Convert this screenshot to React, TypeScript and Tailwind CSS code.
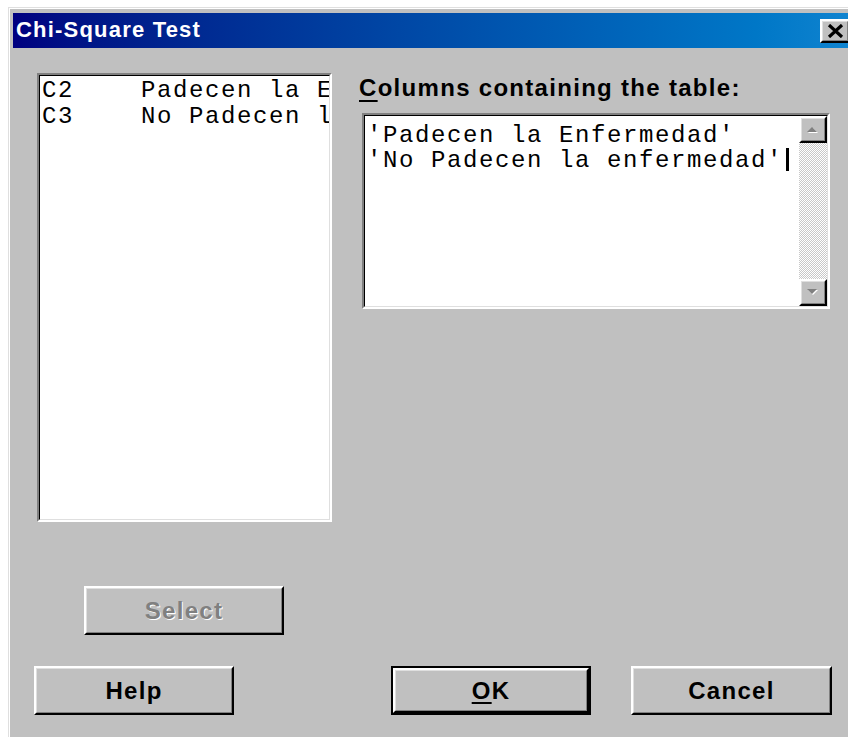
import type { ReactNode } from "react";

// Win9x-style raised bevel used by push buttons and scroll arrows
function Raised({ children, className = "" }: { children?: ReactNode; className?: string }) {
  return (
    <div
      className={`border-2 border-t-white border-l-white border-r-black border-b-black bg-[#c0c0c0] ${className}`}
    >
      <div className="flex h-full w-full items-center justify-center border border-t-[#dfdfdf] border-l-[#dfdfdf] border-r-[#808080] border-b-[#808080]">
        {children}
      </div>
    </div>
  );
}

function Sunken({ children, className = "" }: { children?: ReactNode; className?: string }) {
  return (
    <div
      className={`border-2 border-t-[#808080] border-l-[#808080] border-r-white border-b-white ${className}`}
    >
      <div className="h-full w-full overflow-hidden border border-t-black border-l-black border-r-[#dfdfdf] border-b-[#dfdfdf] bg-white">
        {children}
      </div>
    </div>
  );
}

function PushButton({
  children,
  disabled = false,
  className = "",
}: {
  children: ReactNode;
  disabled?: boolean;
  className?: string;
}) {
  return (
    <Raised className={`h-[49px] w-[200px] ${className}`}>
      <span
        className={`text-[24px] font-bold tracking-[1.3px] ${
          disabled ? "text-[#808080] [text-shadow:1px_1px_0_#fff]" : "text-black"
        }`}
      >
        {children}
      </span>
    </Raised>
  );
}

function Arrow({ up }: { up: boolean }) {
  const d = up ? "M1 7 L6 2 L11 7 Z" : "M1 1 L6 6 L11 1 Z";
  return (
    <svg width="14" height="9" viewBox="0 0 14 9">
      <path d={d} fill="#fff" transform="translate(1 1)" />
      <path d={d} fill="#808080" />
    </svg>
  );
}

const columns = [
  { id: "C2", name: "Padecen la Enfermedad" },
  { id: "C3", name: "No Padecen la enfermedad" },
];

export default function App() {
  return (
    <div className="h-[738px] w-[848px] overflow-hidden bg-white pl-[8px] pt-[7px] [font-family:'Liberation_Sans',Arial,sans-serif]">
      <div className="h-[730px] w-[849px] border-l border-t border-[#dfdfdf]">
        <div className="flex h-full flex-col border-l border-t border-white bg-[#c0c0c0] pl-[3px] pr-[5px] pt-[4px]">
          {/* title bar */}
          <div className="flex h-[35px] shrink-0 items-center bg-linear-to-r from-[#000080] to-[#1084d0] pl-[3px] pr-[2px]">
            <span className="pb-[2px] text-[22px] font-bold tracking-[1.2px] text-white">Chi-Square Test</span>
            <Raised className="ml-auto h-[24px] w-[30px]">
              <svg width="19" height="14" viewBox="0 0 19 14">
                <path d="M3 1 L16 13 M16 1 L3 13" stroke="#000" strokeWidth="3.2" />
              </svg>
            </Raised>
          </div>

          <div className="flex pt-[25px]">
            {/* variable list */}
            <div className="ml-[24px] flex w-[295px] flex-col">
              <Sunken className="h-[449px] w-[295px]">
                <ul className="pl-[2px] pt-[2px] text-[24px] leading-[26px] tracking-[1.6px] whitespace-nowrap [font-family:'Liberation_Mono','Courier_New',monospace]">
                  {columns.map((c) => (
                    <li key={c.id} className="flex overflow-hidden">
                      <span className="w-[99px] shrink-0">{c.id}</span>
                      <span className="min-w-0 flex-1 overflow-hidden">{c.name}</span>
                    </li>
                  ))}
                </ul>
              </Sunken>
              <PushButton disabled className="ml-[47px] mt-[64px]">
                Select
              </PushButton>
            </div>

            {/* selected columns */}
            <div className="ml-[27px] flex flex-col">
              <label className="mt-[1px] text-[24px] font-bold leading-[28px] tracking-[1.3px] text-black">
                <span className="underline decoration-2 underline-offset-[4px]">C</span>olumns containing the table:
              </label>
              <Sunken className="ml-[3px] mt-[11px] h-[196px] w-[468px]">
                <div className="flex h-full">
                  <div className="min-w-0 flex-1 overflow-hidden pl-[2px] pt-[7px] text-[24px] leading-[25px] tracking-[1.6px] whitespace-nowrap [font-family:'Liberation_Mono','Courier_New',monospace]">
                    <div>'Padecen la Enfermedad'</div>
                    <div>
                      'No Padecen la enfermedad'
                      <span className="ml-[3px] inline-block h-[23px] w-[3px] bg-black align-[-4px]" />
                    </div>
                  </div>
                  <div className="flex w-[28px] shrink-0 flex-col">
                    <Raised className="h-[27px] w-[28px]">
                      <Arrow up />
                    </Raised>
                    <div className="flex-1 bg-[#e0e0e0] bg-[repeating-conic-gradient(#c8c8c8_0%_25%,#fff_0%_50%)] bg-size-[2px_2px]" />
                    <Raised className="h-[27px] w-[28px]">
                      <Arrow up={false} />
                    </Raised>
                  </div>
                </div>
              </Sunken>
            </div>
          </div>

          {/* dialog buttons */}
          <div className="mt-[31px] flex">
            <PushButton className="ml-[21px]">Help</PushButton>
            <div className="ml-[157px] h-[49px] w-[200px] border-2 border-black">
              <Raised className="h-full w-full">
                <span className="text-[24px] font-bold tracking-[1.3px] text-black">
                  <span className="underline decoration-2 underline-offset-[3px]">O</span>K
                </span>
              </Raised>
            </div>
            <PushButton className="ml-[40px] w-[201px]">Cancel</PushButton>
          </div>
        </div>
      </div>
    </div>
  );
}
